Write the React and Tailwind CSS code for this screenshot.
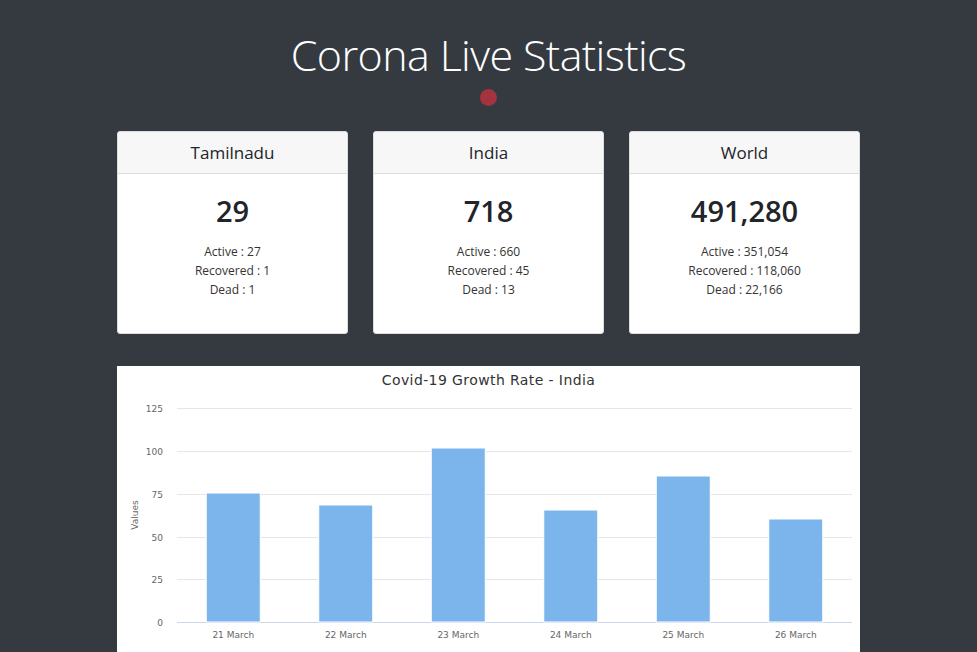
import React from "react";

const cards = [
  { name: "Tamilnadu", total: "29", active: "27", recovered: "1", dead: "1" },
  { name: "India", total: "718", active: "660", recovered: "45", dead: "13" },
  { name: "World", total: "491,280", active: "351,054", recovered: "118,060", dead: "22,166" },
];

const bars = [
  { label: "21 March", top: 493 },
  { label: "22 March", top: 505 },
  { label: "23 March", top: 448 },
  { label: "24 March", top: 510 },
  { label: "25 March", top: 476 },
  { label: "26 March", top: 519 },
];

function Chart() {
  const oy = 366;
  const ox = 117;
  const grid = [
    { v: "125", y: 408 },
    { v: "100", y: 451 },
    { v: "75", y: 494 },
    { v: "50", y: 537 },
    { v: "25", y: 579 },
    { v: "0", y: 622 },
  ];
  const left = 177 - ox;
  const right = 852 - ox;
  const cat = (right - left) / 6;
  return (
    <svg width="743" height="320" viewBox="0 0 743 320" className="block" style={{ fontFamily: "'DejaVu Sans', Verdana, sans-serif" }}>
      <text x="371.5" y={385 - oy} textAnchor="middle" fontSize="14" letterSpacing="0.4" fill="#333333">
        Covid-19 Growth Rate - India
      </text>
      {grid.map((g) => (
        <g key={g.v}>
          <line
            x1={left}
            x2={right}
            y1={g.y - oy + 0.5}
            y2={g.y - oy + 0.5}
            stroke={g.v === "0" ? "#ccd6eb" : "#e6e6e6"}
            strokeWidth="1"
          />
          <text x={163 - ox} y={g.y - oy + 3.5} textAnchor="end" fontSize="9" fill="#666666">
            {g.v}
          </text>
        </g>
      ))}
      <text
        x={0}
        y={0}
        fontSize="9"
        fill="#666666"
        textAnchor="middle"
        transform={`translate(${138 - ox} ${515 - oy}) rotate(-90)`}
      >
        Values
      </text>
      {bars.map((b, i) => {
        const cx = left + cat * i + cat / 2;
        const w = 54;
        const top = b.top - oy;
        const bottom = 622 - oy;
        return (
          <g key={b.label}>
            <rect x={cx - w / 2} y={top} width={w} height={bottom - top} fill="#7cb5ec" stroke="#ffffff" strokeWidth="1" />
            <text x={cx} y={638 - oy} textAnchor="middle" fontSize="9" fill="#666666">
              {b.label}
            </text>
          </g>
        );
      })}
    </svg>
  );
}

export default function App() {
  return (
    <div className="min-h-[800px] bg-[#343a40]" style={{ fontFamily: "'Open Sans', 'Noto Sans', sans-serif" }}>
      <div className="mx-auto w-[743px]">
        <div className="flex flex-col items-center pt-[26px]">
          <h1 className="text-[43px] font-light leading-[58px] text-white tracking-[-0.6px]">Corona Live Statistics</h1>
          <div className="mt-[5px] h-[17px] w-[17px] rounded-full bg-[#a3333f]" />
        </div>
        <div className="mt-[25px] grid grid-cols-3 gap-[25px]">
          {cards.map((c) => (
            <div key={c.name} className="h-[203px] overflow-hidden rounded-[3px] border border-[#dcdcdc] bg-white">
              <div className="flex h-[42px] items-center justify-center border-b border-[#dcdcdc] bg-[#f7f7f7] text-[17px] text-[#212529]">
                {c.name}
              </div>
              <div className="flex flex-col items-center text-[#212529]">
                <div className="mt-[17px] text-[29px] font-semibold leading-[40px]">{c.total}</div>
                <div className="mt-[11px] flex flex-col items-center text-[12px] leading-[19px] text-[#333]">
                  <div>Active : {c.active}</div>
                  <div>Recovered : {c.recovered}</div>
                  <div>Dead : {c.dead}</div>
                </div>
              </div>
            </div>
          ))}
        </div>
        <div className="mt-[32px] bg-white">
          <Chart />
        </div>
      </div>
    </div>
  );
}
